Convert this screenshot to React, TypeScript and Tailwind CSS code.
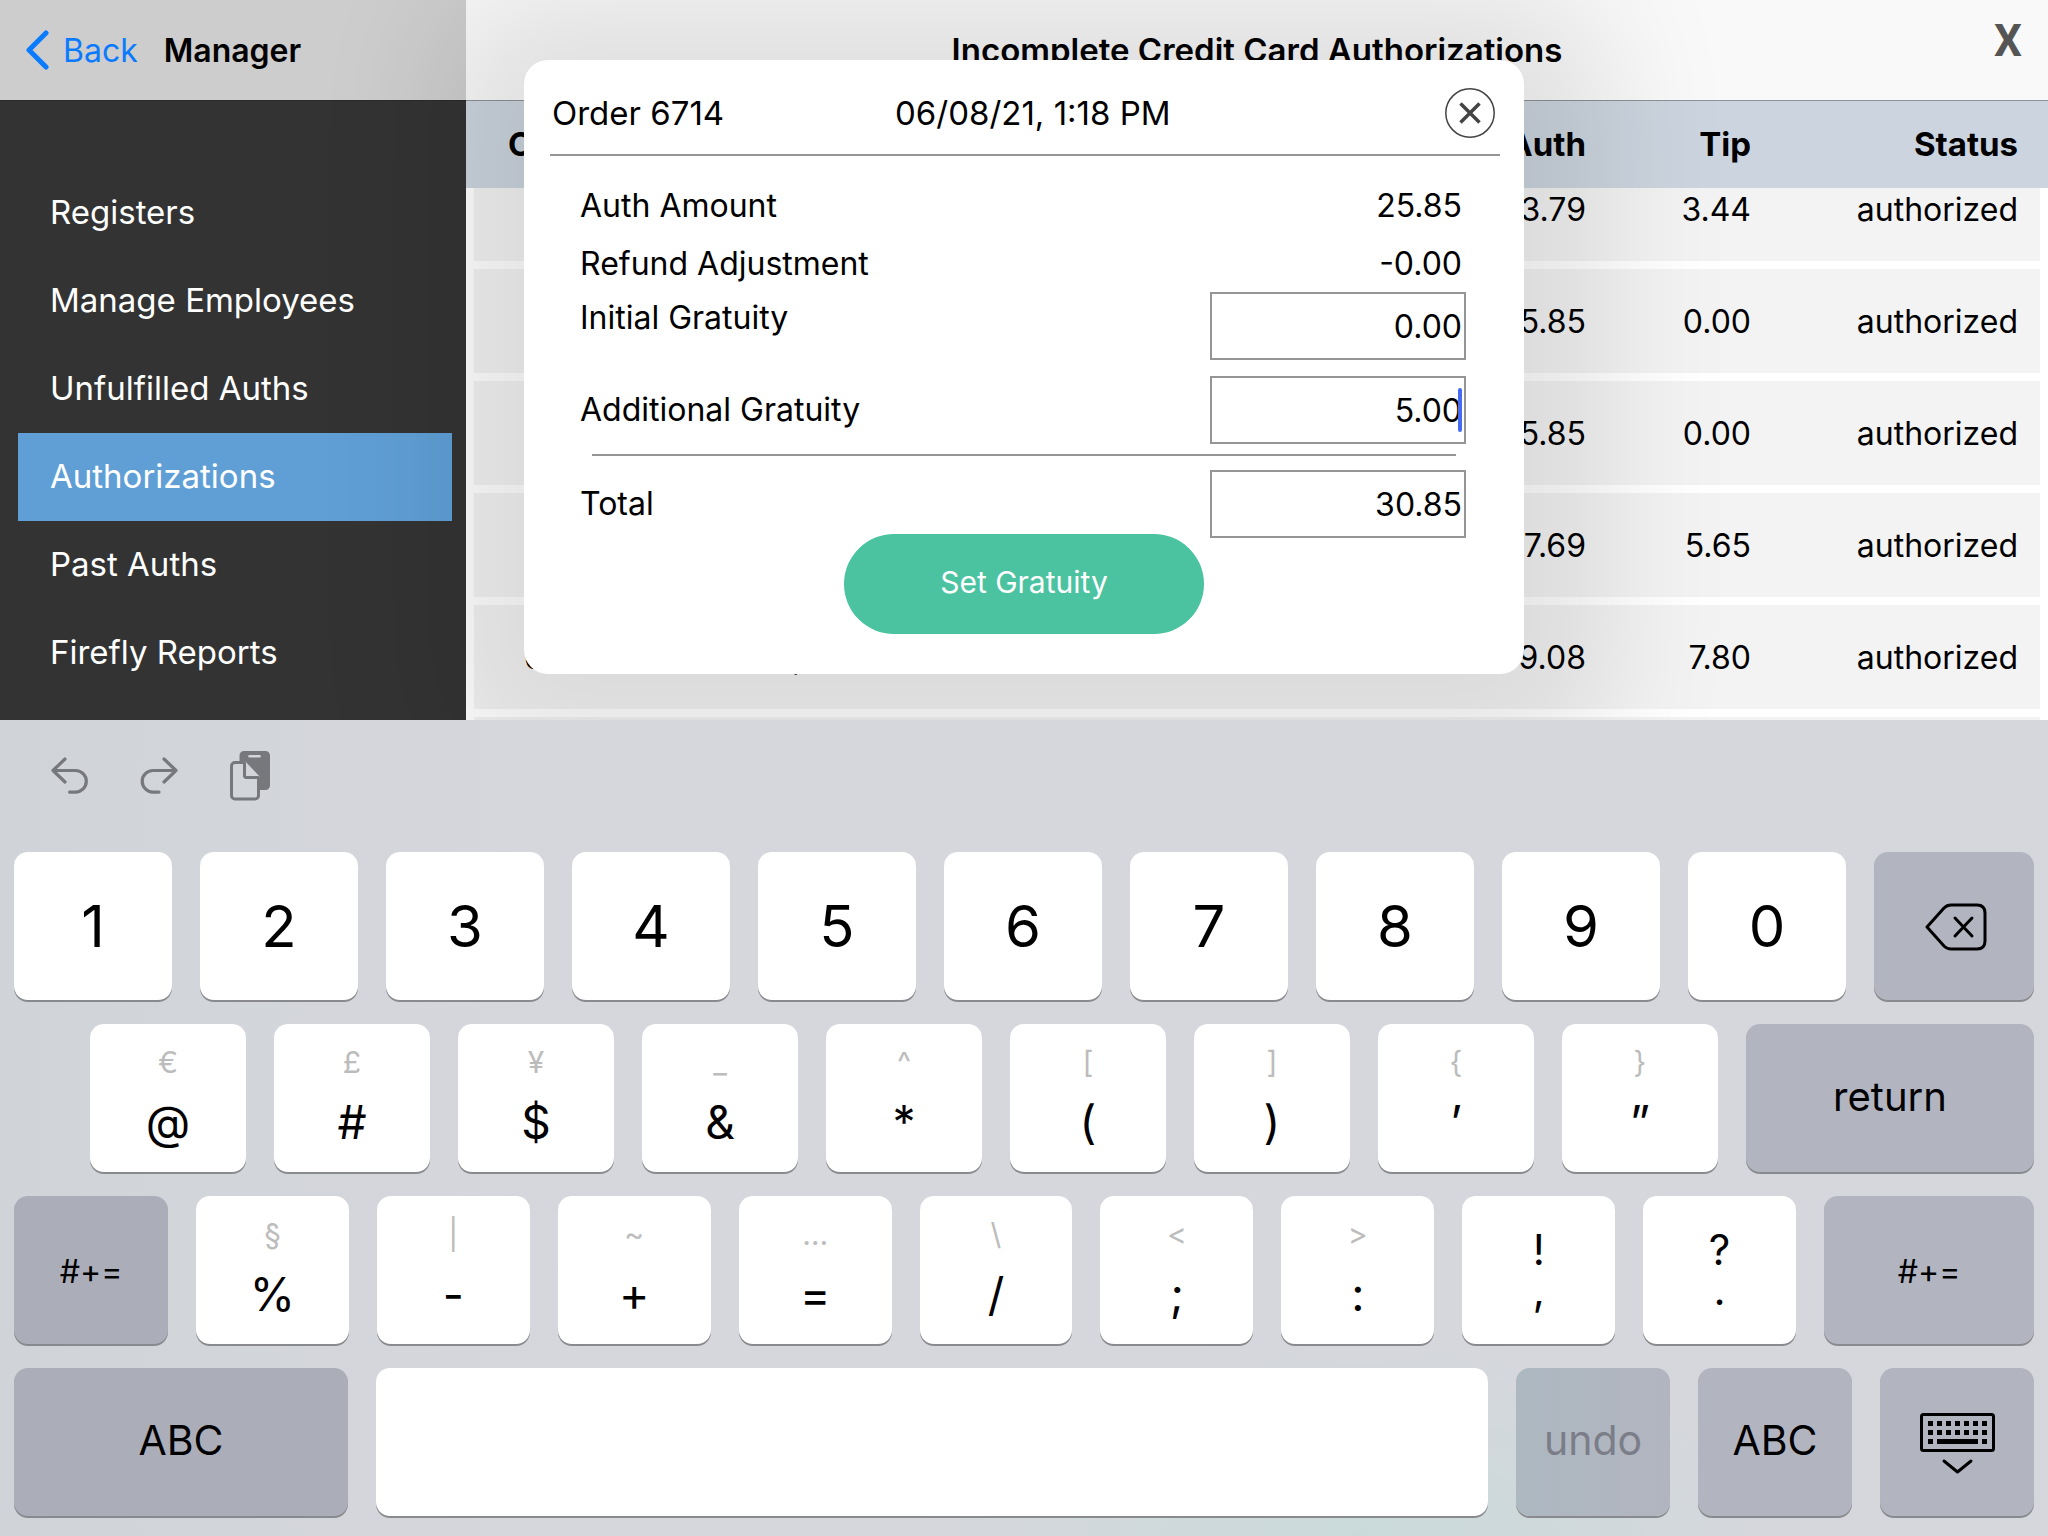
import React, { useState } from 'react';

interface AuthRow {
  order: string;
  date: string;
  auth: string;
  tip: string;
  status: string;
}

interface KeyProps {
  children?: React.ReactNode;
  className?: string;
  label?: string;
}

const menuItems = [
  'Registers',
  'Manage Employees',
  'Unfulfilled Auths',
  'Authorizations',
  'Past Auths',
  'Firefly Reports',
];

const rows: AuthRow[] = [
  { order: '6716', date: '06/08/21, 1:24 PM', auth: '23.79', tip: '3.44', status: 'authorized' },
  { order: '6715', date: '06/08/21, 1:20 PM', auth: '25.85', tip: '0.00', status: 'authorized' },
  { order: '6714', date: '06/08/21, 1:18 PM', auth: '25.85', tip: '0.00', status: 'authorized' },
  { order: '6713', date: '06/08/21, 1:15 PM', auth: '37.69', tip: '5.65', status: 'authorized' },
  { order: '6712', date: '06/08/21, 1:11 PM', auth: '39.08', tip: '7.80', status: 'authorized' },
  { order: '6711', date: '06/08/21, 1:02 PM', auth: '18.40', tip: '2.00', status: 'authorized' },
];

const digits = ['1', '2', '3', '4', '5', '6', '7', '8', '9', '0'];

const symbolRow = [
  ['€', '@'],
  ['£', '#'],
  ['¥', '$'],
  ['_', '&'],
  ['^', '*'],
  ['[', '('],
  [']', ')'],
  ['{', '’'],
  ['}', '”'],
];

const punctuationRow = [
  ['§', '%'],
  ['|', '-'],
  ['~', '+'],
  ['…', '='],
  ['\\', '/'],
  ['<', ';'],
  ['>', ':'],
];

const Key: React.FC<KeyProps> = ({ children, className = 'flex-1 bg-white', label }) => (
  <button
    type="button"
    aria-label={label}
    className={`flex h-[148px] min-w-0 flex-col items-center justify-center rounded-[14px] shadow-[0_2px_0_#898a8d] ${className}`}
  >
    {children}
  </button>
);

const DualKey: React.FC<{ alt: string; main: string }> = ({ alt, main }) => (
  <Key>
    <span className="text-[30px] leading-[52px] text-[#bcbcbc]">{alt}</span>
    <span className="mb-1 text-[46px] leading-[68px]">{main}</span>
  </Key>
);

const Sidebar = () => (
  <aside className="flex w-[466px] shrink-0 flex-col bg-[#333333]">
    <div className="flex h-[101px] shrink-0 items-center border-b border-[#2a2a2a] bg-[#cdcdcd] pl-[26px] text-[32px]">
      <a href="#back" className="flex items-center text-[#0a7aff]">
        <svg width="24" height="40" viewBox="0 0 24 40" fill="none" className="mr-[13px]">
          <path d="M20 3 3 20l17 17" stroke="currentColor" strokeWidth="5" strokeLinecap="round" strokeLinejoin="round" />
        </svg>
        <span className="pt-[2px]">Back</span>
      </a>
      <h2 className="ml-[26px] pt-[2px] font-semibold">Manager</h2>
    </div>
    <nav className="mx-[18px] w-[434px] pt-[68px] text-[33px] text-white">
      {menuItems.map((item) => (
        <a
          key={item}
          href={`#${item}`}
          className={`flex h-[88px] items-center pl-8 ${item === 'Authorizations' ? 'bg-[#5f9fd6]' : ''}`}
        >
          {item}
        </a>
      ))}
    </nav>
  </aside>
);

const columns = (
  <colgroup>
    <col className="w-[183px]" />
    <col />
    <col className="w-[300px]" />
    <col className="w-[165px]" />
    <col className="w-[289px]" />
  </colgroup>
);

const AuthorizationList = () => (
  <main className="flex min-w-0 flex-1 flex-col overflow-hidden bg-white">
    <header className="flex h-[101px] shrink-0 items-center justify-center border-b border-[#8e9298] bg-[#f9f9fa]">
      <h1 className="pt-[2px] text-[33px] font-semibold">Incomplete Credit Card Authorizations</h1>
    </header>
    <div className="relative z-10 h-[87px] shrink-0 bg-[#ccd5df] px-2">
      <table className="w-full table-fixed text-[33px] font-bold">
        {columns}
        <thead>
          <tr className="h-[87px]">
            <th className="pl-[34px] text-left">Order</th>
            <th className="text-left">Date</th>
            <th className="text-right">Auth</th>
            <th className="text-right">Tip</th>
            <th className="pr-[22px] text-right">Status</th>
          </tr>
        </thead>
      </table>
    </div>
    <div className="-mt-[39px] px-2">
      <table className="w-full table-fixed border-separate border-spacing-x-0 border-spacing-y-2 text-[32px]">
        {columns}
        <tbody>
          {rows.map((row) => (
            <tr key={row.order} className="h-[104px] bg-[#f4f3f3]">
              <td className="pt-[2px] pl-[50px]">{row.order}</td>
              <td className="pt-[2px]">{row.date}</td>
              <td className="pt-[2px] text-right">{row.auth}</td>
              <td className="pt-[2px] text-right">{row.tip}</td>
              <td className="pt-[2px] pr-[22px] text-right">{row.status}</td>
            </tr>
          ))}
        </tbody>
      </table>
    </div>
  </main>
);

const GratuityDialog = () => {
  const [initial, setInitial] = useState('0.00');
  const [additional, setAdditional] = useState('5.00');
  const field = 'h-[68px] w-64 border-2 border-[#959595] bg-white pr-[2px] text-right outline-none';

  return (
    <section
      role="dialog"
      aria-label="Order 6714"
      className="w-[1000px] rounded-3xl bg-white px-6 pb-10 text-[32px] shadow-[0_14px_130px_84px_rgba(8,0,4,0.1)]"
    >
      <div className="ml-[2px] flex h-24 items-center border-b-2 border-[#959595] pt-7 pr-[5px] pb-4 text-[33px] leading-[48px]">
        <span className="w-[345px] pl-[2px]">Order 6714</span>
        <span>06/08/21, 1:18 PM</span>
        <button type="button" aria-label="Close" className="ml-auto">
          <svg width="50" height="50" viewBox="0 0 50 50" fill="none" stroke="#444444">
            <circle cx="25" cy="25" r="24.2" strokeWidth="1.5" />
            <path d="m15.5 15.500 19 19m0-19-19 19" strokeWidth="3.500" />
          </svg>
        </button>
      </div>

      <div className="pt-5 pr-[34px] pl-8">
        <div className="flex h-[58px] items-center justify-between pt-[2px] pr-1">
          <span>Auth Amount</span>
          <span>25.85</span>
        </div>
        <div className="flex h-[58px] items-center justify-between pt-[2px] pr-1">
          <span>Refund Adjustment</span>
          <span>-0.00</span>
        </div>
        <div className="flex justify-between">
          <label htmlFor="initial" className="leading-[52px]">Initial Gratuity</label>
          <input id="initial" className={field} value={initial} onChange={(e) => setInitial(e.target.value)} />
        </div>
        <div className="mt-4 flex items-center justify-between">
          <label htmlFor="additional">Additional Gratuity</label>
          <div className="relative">
            <input id="additional" className={field} value={additional} onChange={(e) => setAdditional(e.target.value)} />
            <span className="absolute top-3 right-1 h-11 w-1 rounded-full bg-[#466bf2]" />
          </div>
        </div>
        <div className="mt-[10px] mr-[10px] mb-[14px] ml-3 h-[2px] bg-[#959595]" />
        <div className="flex items-center justify-between">
          <label htmlFor="total">Total</label>
          <input id="total" className={field} value="30.85" readOnly />
        </div>
      </div>

      <button
        type="button"
        className="mx-auto -mt-1 flex h-[100px] w-[360px] items-center justify-center rounded-full bg-[#4bc3a0] pb-1 text-[30px] text-white"
      >
        Set Gratuity
      </button>
    </section>
  );
};

const Keyboard = () => (
  <div className="relative z-20 shrink-0 bg-[radial-gradient(ellipse_440px_200px_at_1360px_100%,#cadada,transparent),linear-gradient(to_right,#d0d4d9,#d6d7dc_30%)] px-[14px] pb-5">
    <div className="mb-5 flex h-28 items-center gap-[52px] pl-9 text-[#77787c]">
      <button type="button" aria-label="Undo">
        <svg width="38" height="38" viewBox="0 0 38 38" fill="none" stroke="currentColor" strokeWidth="3.200" strokeLinecap="round" strokeLinejoin="round">
          <path d="M15 2 3 13.500 15 25M3 13.500h22.500a10.800 10.800 0 0 1 0 21.600h-6" />
        </svg>
      </button>
      <button type="button" aria-label="Redo">
        <svg width="38" height="38" viewBox="0 0 38 38" fill="none" stroke="currentColor" strokeWidth="3.200" strokeLinecap="round" strokeLinejoin="round">
          <path d="m24 2 12 11.500L24 25M36 13.500H13a10.800 10.800 0 0 0 0 21.600h6" />
        </svg>
      </button>
      <button type="button" aria-label="Paste">
        <svg width="40" height="50" viewBox="0 0 40 50" fill="none">
          <path d="M14 0h21.500a4.500 4.500 0 0 1 4.500 4.500v30a4.500 4.500 0 0 1-4.500 4.500H30V26L15 10H9.500V4.500A4.500 4.500 0 0 1 14 0Z" fill="currentColor" />
          <path d="M19.500 5.300h10" stroke="#d2d5da" strokeWidth="2.500" strokeLinecap="round" />
          <path d="M14.500 11.500H5a3.500 3.500 0 0 0-3.500 3.500v29.500A3.500 3.500 0 0 0 5 48h20a3.500 3.500 0 0 0 3.500-3.500V26.500Z" fill="#d2d5da" />
          <path d="M14.500 11.500H5a3.500 3.500 0 0 0-3.500 3.500v29.500A3.500 3.500 0 0 0 5 48h20a3.500 3.500 0 0 0 3.500-3.500V26.500H16a1.500 1.500 0 0 1-1.500-1.500Z" stroke="currentColor" strokeWidth="3" strokeLinejoin="round" />
          <path d="M16 15v9a1 1 0 0 0 1 1h8.500Z" fill="#d2d5da" />
        </svg>
      </button>
    </div>

    <div className="flex flex-col gap-6">
      <div className="flex gap-7">
        {digits.map((digit) => (
          <Key key={digit}>
            <span className="text-[58px] leading-none">{digit}</span>
          </Key>
        ))}
        <Key className="w-[160px] bg-[#b2b5c0]" label="Delete">
          <svg width="62" height="48" viewBox="0 0 62 48" fill="none" stroke="currentColor" strokeWidth="3" strokeLinecap="round" strokeLinejoin="round" className="mt-[2px] ml-1">
            <path d="M2 24 19 5q3-3 7-3h26q8 0 8 8v28q0 8-8 8H26q-4 0-7-3Z" />
            <path d="m30 15 17 18m0-18L30 33" />
          </svg>
        </Key>
      </div>

      <div className="flex gap-7 pl-[76px]">
        {symbolRow.map(([alt, main]) => (
          <DualKey key={main} alt={alt} main={main} />
        ))}
        <Key className="w-72 bg-[#b2b5c0]">
          <span className="pb-[2px] text-[40px]">return</span>
        </Key>
      </div>

      <div className="flex gap-7">
        <Key className="w-[154px] bg-[#abaeb9]">
          <span className="pt-1 text-[32px]">#+=</span>
        </Key>
        {punctuationRow.map(([alt, main]) => (
          <DualKey key={main} alt={alt} main={main} />
        ))}
        <Key>
          <span className="text-[42px] leading-10">!</span>
          <span className="text-[42px] leading-10">,</span>
        </Key>
        <Key>
          <span className="text-[42px] leading-10">?</span>
          <span className="text-[42px] leading-10">.</span>
        </Key>
        <Key className="w-[210px] bg-[#b2b5c0]">
          <span className="pt-1 text-[32px]">#+=</span>
        </Key>
      </div>

      <div className="flex gap-7">
        <Key className="w-[334px] bg-[#abaeb9]">
          <span className="pb-[2px] text-[41px]">ABC</span>
        </Key>
        <Key label="Space" />
        <Key className="w-[154px] bg-linear-to-r from-[#adb8c1] to-[#b2b5c0]">
          <span className="pb-[2px] text-[41px] text-[#7b7e88]">undo</span>
        </Key>
        <Key className="w-[154px] bg-[#b2b5c0]">
          <span className="pb-[2px] text-[41px]">ABC</span>
        </Key>
        <Key className="w-[154px] bg-[#b2b5c0]" label="Hide keyboard">
          <svg width="75" height="62" viewBox="0 0 75 62" fill="none" stroke="currentColor" className="mt-1">
            <rect x="1.500" y="1.500" width="72" height="36" rx="2" strokeWidth="3" />
            <path d="M8 10.500h59M8 19.500h59" strokeWidth="5" strokeDasharray="5 4" />
            <path d="M8 28.500h5M17 28.500h41M62 28.500h5" strokeWidth="5" />
            <path d="m24 48 13.500 11L51 48" strokeWidth="3" strokeLinecap="round" strokeLinejoin="round" />
          </svg>
        </Key>
      </div>
    </div>
  </div>
);

const App = () => (
  <div className="flex h-screen flex-col overflow-hidden bg-white font-['Inter','Liberation_Sans',sans-serif] text-black">
    <div className="relative flex min-h-0 flex-1 overflow-hidden">
      <Sidebar />
      <AuthorizationList />
      <div className="absolute inset-x-0 top-[60px] z-20 flex justify-center">
        <GratuityDialog />
      </div>
      <button
        type="button"
        aria-label="Close list"
        className="absolute top-[18px] right-[26px] z-20 font-['Roboto',sans-serif] text-[44px] leading-[46px] font-bold text-[#555555]"
      >
        X
      </button>
    </div>
    <Keyboard />
  </div>
);

export default App;
